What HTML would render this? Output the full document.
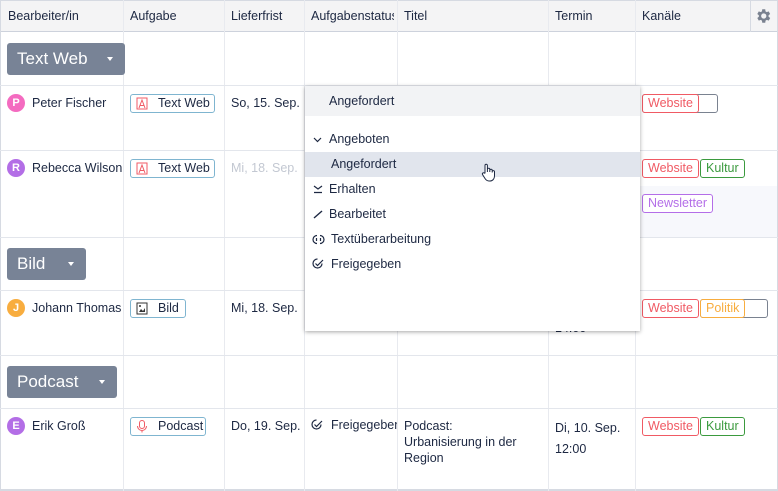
<!DOCTYPE html><html><head><meta charset="utf-8"><style>
*{box-sizing:border-box;margin:0;padding:0}
body{width:778px;height:491px;background:#fff;font-family:"Liberation Sans",sans-serif;font-size:12.5px;color:#1d2842;position:relative;overflow:hidden}
.a{position:absolute}
.hl{position:absolute;left:0;width:778px;height:1px;background:#e3e6ec}
.vl{position:absolute;width:1px;background:#e8eaef}
.grp{position:absolute;left:7px;height:32px;background:#788396;border-radius:3px;color:#fff;font-size:17px;line-height:32px;padding-left:10px}
.grp:after{content:"";position:absolute;right:12px;top:14px;border:3.5px solid transparent;border-top:4px solid #fff}
.av{position:absolute;width:18px;height:18px;border-radius:50%;color:#fff;font-size:11px;font-weight:bold;text-align:center;line-height:18px}
.tag{position:absolute;height:19px;border:1px solid #7fb5d0;border-radius:3px;line-height:17px;padding-left:27px;font-size:12.5px}
.ch{position:absolute;height:19px;border:1px solid;border-radius:3px;line-height:17px;padding:0 5px;font-size:12.5px;background:#fff}
.mi{position:absolute;left:0;width:335px;height:25px;line-height:25px}
.ic{position:absolute}
</style></head><body>
<div class="a" style="left:0;top:0;width:778px;height:32px;background:#f4f4f5;border-bottom:1px solid #cdd2dc;border-top:1px solid #d6dae2"></div>
<div class="a" style="left:0;top:0;width:1px;height:491px;background:#d6dae2"></div>
<div class="a" style="left:777px;top:0;width:1px;height:491px;background:#d6dae2"></div>
<div class="a" style="left:0;top:489px;width:778px;height:2px;background:#d6dae2"></div>
<div class="a" style="left:635px;top:186px;width:142px;height:51px;background:#f7f8fc"></div>
<div class="vl" style="left:123px;top:0;height:491px"></div>
<div class="vl" style="left:224px;top:0;height:491px"></div>
<div class="vl" style="left:304px;top:0;height:491px"></div>
<div class="vl" style="left:397px;top:0;height:491px"></div>
<div class="vl" style="left:548px;top:0;height:491px"></div>
<div class="vl" style="left:635px;top:0;height:491px"></div>
<div class="vl" style="left:750px;top:0;height:32px;background:#d6dae2"></div>
<div class="hl" style="top:85px"></div><div class="hl" style="top:150px"></div><div class="hl" style="top:237px"></div><div class="hl" style="top:290px"></div><div class="hl" style="top:355px"></div><div class="hl" style="top:408px"></div>
<div class="a" style="left:8px;top:9px">Bearbeiter/in</div>
<div class="a" style="left:130px;top:9px">Aufgabe</div>
<div class="a" style="left:231px;top:9px">Lieferfrist</div>
<div class="a" style="left:311px;top:9px;width:83px;overflow:hidden;white-space:nowrap">Aufgabenstatus</div>
<div class="a" style="left:404px;top:9px">Titel</div>
<div class="a" style="left:555px;top:9px">Termin</div>
<div class="a" style="left:642px;top:9px">Kanäle</div>
<svg class="a" style="left:754px;top:7px" width="18" height="18" viewBox="0 0 24 24"><path fill="#7a8290" d="M19.4 13a7.5 7.5 0 000-2l2.1-1.6-2-3.5-2.5 1a7 7 0 00-1.700-1L15 3h-4l-.4 2.9a7 7 0 00-1.7 1l-2.5-1-2 3.5L6.5 11a7.5 7.5 0 000 2l-2.1 1.6 2 3.5 2.5-1a7 7 0 001.7 1L11 21h4l.4-2.9a7 7 0 001.7-1l2.5 1 2-3.5zM13 15.5a3.5 3.5 0 110-7 3.5 3.5 0 010 7z"/></svg>
<div class="grp" style="top:43px;width:118px">Text Web</div>
<div class="grp" style="top:248px;width:79px">Bild</div>
<div class="grp" style="top:366px;width:110px">Podcast</div>
<div class="av" style="left:7px;top:94px;background:#f46bc0">P</div><div class="a" style="left:32px;top:96px">Peter Fischer</div>
<div class="av" style="left:7px;top:159px;background:#b36ee6">R</div><div class="a" style="left:32px;top:161px">Rebecca Wilson</div>
<div class="av" style="left:7px;top:299px;background:#f8ad3f">J</div><div class="a" style="left:32px;top:301px">Johann Thomas</div>
<div class="av" style="left:7px;top:417px;background:#b36ee6">E</div><div class="a" style="left:32px;top:419px">Erik Groß</div>
<div class="tag" style="left:130px;top:94px;width:85px">Text Web</div>
<svg class="a" style="left:136px;top:97px" width="12" height="13"><rect x="1" y="1" width="10" height="11" fill="none" stroke="#f05a64"/><path d="M3 11L6 3l3 8M4 8.5h4" fill="none" stroke="#f05a64"/></svg>
<div class="tag" style="left:130px;top:159px;width:85px">Text Web</div>
<svg class="a" style="left:136px;top:162px" width="12" height="13"><rect x="1" y="1" width="10" height="11" fill="none" stroke="#f05a64"/><path d="M3 11L6 3l3 8M4 8.5h4" fill="none" stroke="#f05a64"/></svg>
<div class="tag" style="left:130px;top:299px;width:56px">Bild</div>
<svg class="a" style="left:136px;top:302px" width="12" height="13"><rect x="1" y="1" width="10" height="11" fill="none" stroke="#333"/><path d="M3 10l2-3 2 2 2-3v4z" fill="#333"/><circle cx="4" cy="4" r="1" fill="#333"/></svg>
<div class="tag" style="left:130px;top:417px;width:76px">Podcast</div>
<svg class="a" style="left:136px;top:420px" width="12" height="13"><rect x="3.5" y="0.5" width="5" height="8" rx="2.5" fill="none" stroke="#f05a64"/><path d="M1.5 6a4.5 4.5 0 009 0M6 10.5v2" fill="none" stroke="#f05a64"/></svg>
<div class="a" style="left:231px;top:96px">So, 15. Sep.</div>
<div class="a" style="left:231px;top:161px;color:#c3c8d2">Mi, 18. Sep.</div>
<div class="a" style="left:231px;top:301px">Mi, 18. Sep.</div>
<div class="a" style="left:231px;top:419px">Do, 19. Sep.</div>
<svg class="ic" style="left:311px;top:419px" width="12" height="12" viewBox="0 0 12 12"><path d="M10 5.5A4.5 4.5 0 115.5 1M3.5 5.5l2 2L11 2" fill="none" stroke="#1d2842" stroke-width="1.2"/></svg>
<div class="a" style="left:331px;top:418px;width:66px;overflow:hidden;white-space:nowrap">Freigegeben</div>
<div class="a" style="left:404px;top:418px;line-height:16px">Podcast:<br>Urbanisierung in der<br>Region</div>
<div class="a" style="left:555px;top:418px;line-height:21px">Di, 10. Sep.<br>12:00</div>
<div class="a" style="left:555px;top:321px">14:00</div>
<div class="ch" style="left:642px;top:94px;width:76px;border-color:#7a8290"></div>
<div class="ch" style="left:642px;top:94px;color:#f05a64;border-color:#f05a64">Website</div>
<div class="ch" style="left:700px;top:159px;color:#3b9a3e;border-color:#3b9a3e">Kultur</div>
<div class="ch" style="left:642px;top:159px;color:#f05a64;border-color:#f05a64">Website</div>
<div class="ch" style="left:642px;top:194px;color:#b46ee8;border-color:#b46ee8">Newsletter</div>
<div class="ch" style="left:700px;top:299px;width:68px;border-color:#7a8290"></div>
<div class="ch" style="left:700px;top:299px;color:#f8ad3f;border-color:#f8ad3f">Politik</div>
<div class="ch" style="left:642px;top:299px;color:#f05a64;border-color:#f05a64">Website</div>
<div class="ch" style="left:700px;top:417px;color:#3b9a3e;border-color:#3b9a3e">Kultur</div>
<div class="ch" style="left:642px;top:417px;color:#f05a64;border-color:#f05a64">Website</div>
<div class="a" style="left:305px;top:86px;width:335px;height:245px;background:#fff;box-shadow:0 1px 4px rgba(0,0,0,.35)">
<div class="mi" style="top:0;height:30px;line-height:30px;background:#f2f3f5;padding-left:24px">Angefordert</div>
<div class="mi" style="top:41px;padding-left:24px">Angeboten</div>
<svg class="ic" style="left:8px;top:50px" width="9" height="7"><path d="M1 2l3.5 3.5L8 2" fill="none" stroke="#1d2842" stroke-width="1.2"/></svg>
<div class="mi" style="top:66px;background:#e1e5ed;padding-left:26px">Angefordert</div>
<div class="mi" style="top:91px;padding-left:24px">Erhalten</div>
<svg class="ic" style="left:8px;top:98px" width="10" height="10"><path d="M1 2l4 3 4-3M1 8.5h8" fill="none" stroke="#1d2842" stroke-width="1.2"/></svg>
<div class="mi" style="top:116px;padding-left:24px">Bearbeitet</div>
<svg class="ic" style="left:8px;top:123px" width="10" height="10"><path d="M1 9L9 2" fill="none" stroke="#1d2842" stroke-width="1.4"/></svg>
<div class="mi" style="top:141px;padding-left:26px">Textüberarbeitung</div>
<svg class="ic" style="left:7px;top:148px" width="13" height="11"><path d="M5 1.5A4 4 0 005 9.5M8 1.5A4 4 0 018 9.5M4.5 4v3M8.5 4v3" fill="none" stroke="#1d2842" stroke-width="1.2"/></svg>
<div class="mi" style="top:166px;padding-left:26px">Freigegeben</div>
<svg class="ic" style="left:7px;top:172px" width="12" height="12" viewBox="0 0 12 12"><path d="M10 5.5A4.5 4.5 0 115.5 1M3.5 5.5l2 2L11 2" fill="none" stroke="#1d2842" stroke-width="1.2"/></svg>
</div>
<svg class="a" style="left:481px;top:163px" width="15" height="20" viewBox="0 0 15 20"><path d="M4 10V2.5a1.2 1.2 0 012.4 0V9V6.5a1.2 1.2 0 012.4 0V9V7.5a1.2 1.2 0 012.4 0V9.5V8.5a1.2 1.2 0 012.3 0V13c0 3-2 5-4.5 5H8c-2 0-3-1-4-2.5L1.5 11.5a1.2 1.2 0 012-1.3z" fill="#fff" stroke="#1d2842" stroke-width="1"/></svg>
</body></html>
